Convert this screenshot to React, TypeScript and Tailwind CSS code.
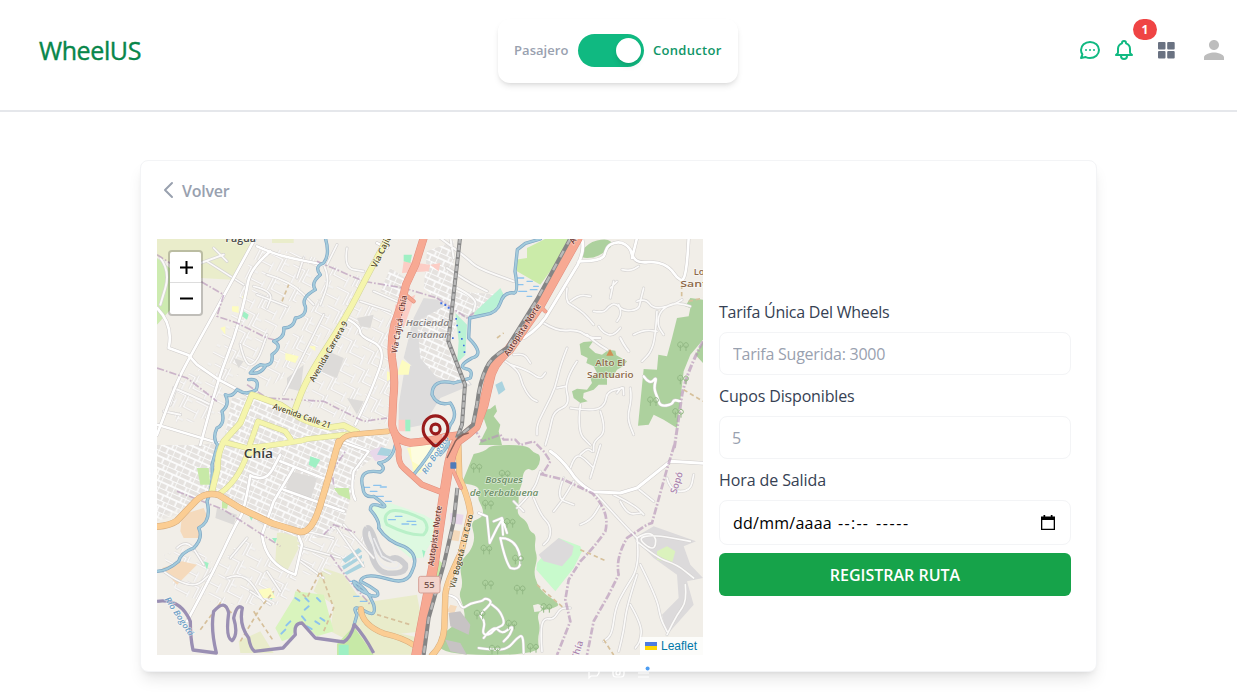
import { HiOutlineBell, HiOutlineChat, HiOutlineChevronLeft, HiOutlineLocationMarker } from 'react-icons/hi';
import { MdPerson } from 'react-icons/md';

type Line = { d: string; w?: number };

/* Motorways and main roads, drawn in one shared coordinate space. */
const TRUNK: Line[] = [
  { d: 'M800 0 L775 80 L747 140 Q735 200 712 260 Q700 310 705 360 Q716 420 709 480 L705 560 Q712 608 760 614 Q810 612 870 596 L905 592', w: 21 },
  { d: 'M712 590 L725 635 Q722 675 740 690 L795 740 L860 765', w: 15 },
  { d: 'M1262 0 L1150 200 L1056 335 Q1005 375 996 430 L980 500 L956 565 Q930 590 900 610 Q880 650 874 690 L858 790 L830 980 L778 1250', w: 27 },
  { d: 'M890 660 L885 690 L912 750 M850 760 Q865 758 868 730', w: 9 },
  { d: 'M1140 195 L1165 220 M745 170 L770 190', w: 9 },
];
const ORANGE: Line[] = [
  { d: 'M545 624 Q553 590 600 588 L692 580', w: 14 },
  { d: 'M545 610 L520 700 L490 801 Q465 884 430 882 L345 856 L250 811 L185 771 Q145 760 115 790 L60 848 Q40 862 0 866', w: 17 },
  { d: 'M612 1114 Q615 1160 680 1186 Q740 1200 768 1220', w: 15 },
  { d: 'M904 621 L907 720 Q935 780 940 825 L912 945 Q868 1035 865 1070 L862 1170 Q858 1220 825 1252', w: 16 },
];
const YELLOW: Line[] = [
  { d: 'M692 0 L632 110 L566 240 L450 420 L412 520', w: 16 },
  { d: 'M600 582 L560 562 L520 568 Q470 560 430 540 L370 500 L285 470 L250 555 L200 610 Q180 650 182 690 L165 760', w: 16 },
  { d: 'M200 612 L270 630 Q430 612 450 603 L600 586', w: 14 },
  { d: 'M275 630 L303 550 L385 580 L402 605 M330 625 L270 650 Q242 730 190 765', w: 14 },
];

/* Local streets. */
const STREETS: Line[] = [
  { d: 'M295 0 L230 120 L100 355 L60 430 L0 590', w: 8 },
  { d: 'M340 40 L280 90 L265 180 L232 300 L185 420 L130 621', w: 8 },
  { d: 'M0 210 Q50 260 35 330 L95 352 L120 380 L185 425 L280 475', w: 8 },
  { d: 'M0 560 L100 590 L200 620 M300 25 L345 45 L400 60 L500 80', w: 7 },
  { d: 'M575 245 L610 265 L608 295 L690 330 L640 465 L595 560 M660 15 L690 30', w: 7 },
  { d: 'M280 712 L262 820 L235 860 L170 1000 L90 1150 M280 712 L325 735 L370 650 M370 670 L510 725', w: 8 },
  { d: 'M410 690 L350 790 L315 890 Q325 980 415 1010 L435 920 L425 895 M380 755 L560 820', w: 8 },
  { d: 'M550 610 L635 640 L590 700 Q580 760 595 785', w: 7 },
  { d: 'M1274 0 Q1285 35 1262 80 L1180 215 Q1155 265 1100 300', w: 9 },
  { d: 'M1265 70 L1300 70 L1340 60 L1345 40 L1355 20 L1390 10 L1420 30 L1425 55 L1445 75 L1500 70 L1540 90 L1560 120 L1580 130 L1590 80 L1595 0 M1425 60 L1440 0', w: 8 },
  { d: 'M1180 640 Q1210 660 1240 700 Q1260 735 1305 761 L1390 765 L1440 750 L1540 670 L1638 676', w: 9 },
  { d: 'M1460 415 L1478 440 L1500 415 L1490 450 L1502 480 L1510 505 L1545 500 L1550 485 L1570 490', w: 7 },
  { d: 'M965 825 L990 835 L998 915 L1020 870 L1035 845 L1038 890 M1010 850 L1035 840 L1050 885 M1030 900 Q1080 900 1090 960 Q1095 1000 1060 990 Q1045 970 1030 900', w: 6 },
  { d: 'M870 1070 L900 1075 L915 1115 L940 1095 L975 1090 L985 1080 L1005 1090 L990 1110 L965 1130 L985 1150 L975 1190 L1000 1190 L1015 1170 L1045 1160 L1030 1120 L1005 1100 M980 1200 L1010 1160 L1035 1190 L1070 1160 L1060 1190 L1040 1210 M965 1230 L1000 1235 L1050 1235 L1080 1200 L1098 1190 L1100 1245', w: 6 },
];
const LANES: Line[] = [
  { d: 'M150 70 L260 140 M210 70 L170 30 M330 110 L400 130 L470 200 M300 170 L390 205 M250 320 L265 385 L300 375 L330 290 M290 145 L350 160 L330 210 M440 60 L420 120 M500 230 L450 330 L380 470', w: 5 },
  { d: 'M10 60 L40 100 L10 200 M50 450 L120 480 L160 500 M40 500 L60 440 M20 520 L70 530 M60 120 L100 60 M90 90 L200 50', w: 6 },
  { d: 'M500 80 L520 120 L490 200 M540 20 L510 80 M570 30 L560 90 L620 100 M650 160 L720 190 M610 190 L700 220 M560 260 L520 340', w: 5 },
  { d: 'M850 0 L930 60 L960 90 L1070 130 M870 90 L930 130 L990 160 M900 150 L960 180 L950 220 M880 0 L890 60', w: 6 },
  { d: 'M1230 150 L1225 190 L1250 205 L1280 225 L1310 260 M1240 190 L1265 170 L1300 175 M1310 220 L1340 225 L1355 205 L1375 195 L1400 220 L1445 215 L1450 190 L1460 150 M1370 130 L1360 180 M1360 150 L1380 130', w: 5 },
  { d: 'M1390 270 L1370 295 L1340 285 L1325 265 M1380 250 L1395 230 L1385 200 M1440 190 L1465 180 L1490 215 L1550 200 L1575 185 M1500 220 L1495 300 L1480 345 L1455 370 M1600 205 L1560 190 L1510 215 L1500 260 L1520 290 M1430 290 L1460 275 L1500 280 M1395 95 L1420 100 L1445 85', w: 5 },
  { d: 'M1160 255 L1200 280 L1260 275 L1300 300 L1330 300 M1390 300 L1400 320 L1415 340 M1290 290 L1310 310 L1350 335', w: 6 },
  { d: 'M1045 370 L1085 395 L1095 440 L1120 480 L1140 490 M1060 380 L1110 395 L1150 425 L1165 405 M1230 330 L1210 380 L1195 450 L1165 510 L1140 560 L1140 590 M1070 350 L1100 345 L1120 375', w: 5 },
  { d: 'M1260 370 L1220 430 L1240 500 L1190 520 L1180 570 L1165 621 M1240 510 L1310 520 L1345 500 L1350 460 L1400 450 M1330 520 L1350 580 L1310 610 L1310 640 M1420 450 L1425 480 L1410 540 L1430 590 M1270 500 L1260 580 L1300 621 M1200 450 L1225 445 M1400 470 L1400 440 L1380 465', w: 5 },
  { d: 'M1080 810 L1130 760 L1150 700 M1070 790 L1100 820 M1130 780 L1150 830 L1180 860 L1180 900 L1160 920 M1190 820 L1215 790 L1250 730 M1220 720 L1195 780 L1250 800 M1270 860 L1300 850 L1330 800 M1310 760 L1400 860 L1440 900', w: 5 },
  { d: 'M1240 690 L1250 660 L1270 650 L1310 690 M1330 621 L1300 720 M1370 770 L1430 800 L1460 830 M1440 750 L1490 790 M1390 790 L1410 830 L1450 825 M1530 720 L1540 760 L1600 760 L1610 710 M1270 650 L1290 630 L1305 640', w: 5 },
  { d: 'M1440 900 L1450 980 L1400 1060 L1375 1110 L1365 1190 L1340 1210 M1450 980 L1500 1080 L1510 1140 L1530 1180 M1440 1010 L1410 1100 L1400 1180 L1385 1240 M1420 1100 L1455 1160 L1450 1210 L1435 1230 M1440 900 L1470 880 L1500 900 L1490 940 L1440 900 L1490 890 L1600 910 M1440 910 L1500 960 L1560 980 L1610 1020 M1585 1040 L1590 1090 L1560 1130 L1530 1190', w: 5 },
  { d: 'M1155 1240 L1150 1180 L1160 1140 L1190 1145 L1210 1110 L1240 1110', w: 5 },
  { d: 'M20 1000 L100 1060 L170 1000 M60 930 L90 900 L140 980 M210 1020 L260 1000 L320 1090 M280 1060 L340 1100 M220 960 L270 900 M330 1000 L370 1060', w: 5 },
  { d: 'M450 880 L530 900 M440 930 L550 960 M430 970 L500 1020 M560 860 L650 960 M540 870 L620 985', w: 5 },
];

const RIVERS: Line[] = [
  { d: 'M505 0 Q520 50 500 75 Q470 85 490 110 Q460 135 475 155 Q430 180 445 205 Q450 235 415 240 Q410 270 380 270 Q385 300 350 310 Q380 325 345 350 Q350 390 310 380 Q290 390 280 405 Q310 410 325 385 M275 425 Q310 420 298 455 Q270 475 240 455 Q225 480 205 470 Q220 500 195 520 Q205 560 180 570 Q165 600 182 621 L165 680 Q170 740 150 790 Q165 850 125 870 Q140 900 110 930 Q70 945 65 970 Q30 1000 0 1000', w: 6 },
  { d: 'M1150 3 L1105 16 L1081 35 L1074 100 Q1085 160 1072 165 Q1040 160 1030 195 Q1020 225 985 230 L938 240 L935 300 Q985 350 945 360 Q900 385 925 392 Q950 395 940 420 Q910 430 890 435 Q825 420 825 470 Q840 505 880 495 Q905 530 880 560 Q860 610 882 640', w: 6 },
  { d: 'M872 600 Q880 620 850 650 M845 600 Q820 650 770 710', w: 6 },
  { d: 'M715 621 Q705 670 665 675 Q690 690 670 702 Q600 690 618 750 Q620 780 650 775 Q700 810 675 806 Q640 790 640 815 Q670 850 665 870 Q690 910 740 925 Q790 950 765 1000 Q750 1040 700 1025 Q620 1000 610 1030 Q640 1045 660 1060 Q670 1080 640 1072 Q590 1050 590 1030 Q630 1050 650 1100 Q660 1140 625 1120 Q580 1095 600 1130 L590 1165', w: 6 },
];

const FOREST = 'M950 648 L985 640 L1000 621 L1110 621 L1130 645 L1150 650 L1148 680 L1130 700 L1112 690 L1098 705 L1095 740 L1085 760 L1085 800 L1080 830 L1110 850 L1118 880 L1138 890 L1132 930 L1142 960 L1130 1000 L1140 1040 L1165 1070 L1210 1098 L1190 1112 L1155 1115 L1140 1130 L1150 1170 L1142 1200 L1148 1251 L845 1251 L845 1190 L870 1180 L890 1160 L925 1150 L920 1105 L905 1070 L918 1040 L908 990 L918 960 L940 940 L955 900 L940 850 L975 840 L980 815 L960 780 L970 745 L915 735 Z';

/* Rounds the corners of a polyline by curving through the middle of each leg. */
function smooth(d: string): string {
  if (d.includes('Q')) return d;
  return d
    .split('M')
    .filter((part) => part.trim())
    .map((part) => {
      const n = (part.match(/-?\d+(\.\d+)?/g) ?? []).map(Number);
      let out = `M${n[0]} ${n[1]}`;
      for (let i = 2; i < n.length - 2; i += 2) {
        out += `Q${n[i]} ${n[i + 1]} ${(n[i] + n[i + 2]) / 2} ${(n[i + 1] + n[i + 3]) / 2}`;
      }
      return `${out}L${n[n.length - 2]} ${n[n.length - 1]}`;
    })
    .join('');
}

function Roads({ lines, color, casing, edge }: { lines: Line[]; color: string; casing: string; edge: number }) {
  return (
    <g fill="none" strokeLinejoin="round" strokeLinecap="round">
      {lines.map((l) => <path key={`c${l.d}`} d={smooth(l.d)} stroke={casing} strokeWidth={(l.w ?? 8) + edge} />)}
      {lines.map((l) => <path key={l.d} d={smooth(l.d)} stroke={color} strokeWidth={l.w ?? 8} />)}
    </g>
  );
}

function Label({ x, y, r = 0, size = 28, fill = '#574f2c', italic = false, w, children }: {
  x: number; y: number; r?: number; size?: number; fill?: string; italic?: boolean; w?: number; children: string;
}) {
  return (
    <text
      transform={`translate(${x} ${y}) rotate(${r})`}
      fontSize={size}
      fill={fill}
      stroke="#ffffff"
      strokeOpacity={0.55}
      strokeWidth={4}
      paintOrder="stroke"
      textAnchor="middle"
      fontStyle={italic ? 'italic' : 'normal'}
      fontWeight={600}
      textLength={w}
      lengthAdjust="spacingAndGlyphs"
    >
      {children}
    </text>
  );
}

function MapDrawing() {
  return (
    <svg viewBox="0 3 1638 1248" className="block h-full w-full" style={{ fontFamily: '"Open Sans", "Noto Sans", sans-serif' }}>
      <defs>
        <pattern id="blocks" width="44" height="34" patternUnits="userSpaceOnUse" patternTransform="rotate(24)">
          <rect width="44" height="34" fill="#e5e2df" />
          <path d="M0 0H44M0 0V34M24 16V34M0 17H44M34 0V17" stroke="#fbfbfb" strokeWidth="5" />
        </pattern>
        <pattern id="sparse" width="74" height="62" patternUnits="userSpaceOnUse" patternTransform="rotate(27)">
          <path d="M5 0V42H50M30 10H70V50M50 62V30M5 18H22" fill="none" stroke="#d9d6d3" strokeWidth="7" />
          <path d="M5 0V42H50M30 10H70V50M50 62V30M5 18H22" fill="none" stroke="#fbfafa" strokeWidth="4.5" />
        </pattern>
      </defs>
      <rect width="1638" height="1254" fill="#f1eee8" />

      {/* Land use */}
      <path d="M0 0H295L225 125L130 120L0 55Z M345 0H410V15H345Z" fill="#eaedcb" />
      <path d="M0 60L45 95L40 215L0 260Z" fill="#cdebb0" />
      <path d="M360 885L415 880L430 920L390 1000L355 970Z M120 630L175 640L155 745L130 700Z M500 990L560 1010L600 1070L650 1090L780 1070L800 1180L700 1190L610 1160L560 1200L520 1180L530 1100L470 1060Z M245 1210L310 1180L350 1245H250Z M610 1160L790 1200L775 1250H600Z" fill="#e9eccb" />
      <path d="M225 480L300 480L420 530L540 570L640 590L700 600L690 621L600 700L560 860L500 900L430 900L330 870L180 765L0 840V621L130 621L200 610Z" fill="url(#blocks)" />
      <path d="M0 621H170L150 760L60 830L0 850Z" fill="url(#blocks)" opacity=".5" />
      <path d="M300 20L480 60L480 130L400 210L350 280L280 390L200 440L150 380L240 200L270 90Z M130 390L230 450L190 540L60 560L40 480L70 420Z M520 80L620 120L560 230L440 380L330 450L290 430L370 340L480 190Z M600 190L720 230L700 560L560 550L440 500L450 420L570 250Z M20 950L110 920L170 980L270 900L330 960L420 1020L380 1100L200 1100L60 1070Z M420 900L520 870L640 900L600 960L520 1010L430 1010Z" fill="url(#sparse)" />
      <path d="M510 340L560 360L540 420L490 400Z M600 240L650 230L640 270L610 265Z M390 420L440 380L430 460L390 450Z M570 480L620 490L600 530Z M230 360L260 370L245 390Z M180 810L240 830L230 860L175 840Z M400 700L480 720L460 790L385 760Z" fill="#dddbd9" />
      <path d="M745 380L830 400L880 360L945 440L850 480L800 560L725 575L725 500Z M800 180L880 190L860 320L820 440L740 360L770 240Z" fill="#dddcdc" />
      <path d="M810 40L890 10L890 160L1040 170L1000 230L920 240L870 210L800 150Z M780 250L870 200L900 260L870 330L940 440L840 420L790 360Z M700 90L760 130L740 190L670 160Z" fill="url(#blocks)" />
      <path d="M740 70L820 80L815 100L735 105Z M715 200L775 170L740 270L712 230Z M725 545L745 545L745 580L725 580Z M820 80L850 75L845 100Z" fill="#fccdc5" />
      <path d="M1110 30L1170 0L1252 0L1150 140L1080 100L1075 65L1110 60Z" fill="#cbeba9" />
      <path d="M950 225L1030 150L1045 180L1000 225L955 235Z M895 225L930 260L925 350L900 375L905 310Z" fill="#b9f2d4" />
      <path d="M640 800L700 795L800 830L835 850L830 900L795 960L760 960L690 900Z" fill="#def9e1" />
      <path d="M355 1170L410 1080L415 1060L500 1070L530 1180L480 1195L430 1150L400 1200L375 1210Z" fill="#d9f4bd" />
      <path d="M540 1218L590 1165L650 1251H540Z M530 750L575 750L580 785L545 770Z M120 690L155 690L160 740L130 740Z M195 790L215 790L210 812L195 810Z M840 960L860 980L840 1070L825 1060Z" fill="#c7e9a7" />
      <path d="M545 1220L575 1220L575 1251H545Z M460 655L475 660L490 665L475 690L455 680Z M275 830L290 835L283 848ZM740 50L765 50L760 75L740 70ZM260 220L275 230L270 245L255 235ZM140 970L155 975L150 995ZM330 1055L350 1065L345 1085L330 1075ZM795 935L805 940L800 960ZM745 545L760 545L760 580L745 580ZM345 900L360 900L355 915Z" fill="#9ff0c4" />
      <path d="M75 830L140 810L155 845L125 870L130 900L80 900L70 880Z M15 990L75 970L120 980L60 1040Z M885 875L910 880L905 910L875 905ZM880 1100L900 1105L890 1130L870 1120Z" fill="#f5dabc" />
      <path d="M750 630L830 621L840 640L800 700L770 710L765 675Z M735 365L760 380L755 410L720 410ZM385 345L425 355L415 375L385 365ZM305 1055L340 1050L355 1080L310 1080ZM255 175L265 175L260 190ZM225 205L245 205L245 225L225 220ZM455 325L475 325L475 340ZM190 270L205 265L205 290ZM690 400L720 410L690 430Z" fill="#fdfcc0" />
      <path d="M760 620L870 600L850 640L800 690L765 670Z" fill="#fdfde0" />
      <path d="M635 640L675 625L690 660L655 670ZM880 825L920 830L915 860L880 855Z" fill="#e8d8ea" />
      <path d="M672 628L705 635L695 655L660 650ZM555 965L605 930L615 940L565 975ZM555 985L615 950L615 960L560 995ZM560 1005L620 970L620 985L570 1010ZM1015 440L1035 430L1045 455L1025 470Z" fill="#aad3df" />
      <path d="M1140 975L1205 900L1270 925L1275 940L1250 990L1195 1060L1138 995Z" fill="#c8facc" />
      <path d="M1145 950L1205 900L1250 925L1245 950L1215 985L1160 970ZM1430 900L1490 865L1617 910L1580 925L1600 980L1638 1020L1590 1030L1610 1100L1530 1190L1515 1130L1565 1080L1560 1010L1490 960Z" fill="#dcdadb" />
      <path d="M1500 940L1530 925L1555 940L1545 975L1500 965Z" fill="#dbf2bd" />
      <path d={smooth(FOREST)} fill="#add19e" />
      <path d="M985 515L1000 512L1015 500L1020 520L1010 535L1030 560L1025 580L1035 621L965 621L980 590L990 570L980 540Z" fill="#add19e" />
      <path d="M875 1125L910 1120L940 1160L935 1190L880 1165ZM865 1205L910 1215L930 1251L880 1240Z" fill="#c7c3c4" />
      <path d={smooth('M1275 40 L1290 15 L1350 0 L1370 20 L1340 45 L1310 60 L1270 60 L1275 40')} fill="#add19e" />
      <path d="M1268 318L1280 312L1308 310L1296 328L1315 345L1335 350L1355 335L1375 338L1378 352L1410 370L1398 385L1380 395L1365 420L1350 418L1350 440L1325 440L1310 455L1280 465L1278 480L1292 490L1270 495L1250 480L1245 460L1260 452L1290 455L1305 435L1300 420L1320 405L1310 385L1288 375L1292 360L1272 350Z M1560 240L1595 235L1600 210L1585 205L1600 180L1638 185V305L1600 350L1580 400L1560 570L1520 545L1490 530L1475 560L1443 563L1460 393L1500 395L1504 350L1530 355L1545 300Z M1615 350L1638 310V375Z" fill="#add19e" />
      <path d="M1128 1102L1143 1098L1158 1105L1150 1120L1132 1122Z" fill="#f1eee8" />

      {/* Wetland marks */}
      <g stroke="#8cc3ee" strokeWidth="4" strokeLinecap="round">
        <path d="M1080 120h20M1080 140h18M1110 130h16M1085 160h24M1120 155h20M1110 175h14M1130 145h14M620 748h18M650 742h22M640 760h20M670 747h18M655 775h24M685 790h18M695 845h20M715 835h20M750 850h26M735 858h20M765 860h12M580 1030h20M600 1055h20M590 1075h16M610 1090h20" />
        <path d="M415 1080l12 8M445 1080l10 10M455 1105l-12 10M480 1080l10 10M475 1150l12 8M490 1140l12 8M400 1150l-12 12M385 1175l-12 12M435 1135l10 12M450 1165l14 8" strokeWidth="6" />
      </g>
      <g fill="none">
        <path d="M700 820Q675 835 690 860Q760 895 800 890Q820 870 800 845Q730 810 700 820Z" stroke="#b9f0c8" strokeWidth="9" />
        <path d="M630 870Q615 885 640 930Q650 1000 690 1005Q750 1010 745 980Q720 950 700 965Q670 960 655 910Q640 865 630 870" stroke="#cdcdd0" strokeWidth="17" />
        <path d="M636 880L655 945Q665 985 695 990Q730 995 725 975M650 900L675 955L715 975" stroke="#ececee" strokeWidth="5" />
      </g>

      <Roads lines={LANES} color="#fbfaf9" casing="#d6d4d3" edge={4} />
      <Roads lines={STREETS} color="#ffffff" casing="#cfcccb" edge={3} />

      {/* Municipal boundaries */}
      <g fill="none" stroke="#b796b9" strokeWidth="5" strokeDasharray="22 6 5 6" opacity=".65">
        <path d="M0 50L70 95L200 170L180 235L240 255L330 300L370 310M480 70L620 130L740 150L840 180" />
        <path d="M0 390L90 420L180 490M270 440L330 480L500 490L620 550L690 540M60 760L200 815L370 925M530 740L525 700L565 640M500 890L530 860L600 885" />
        <path d="M520 950L570 1020L640 1100M840 180L900 220L930 240L950 225" />
        <path d="M1552 621L1528 700L1485 855L1470 860L1410 900Q1375 960 1385 1010L1355 1070L1310 1150L1290 1251" strokeWidth="8" />
        <path d="M1150 708L1220 725L1305 765Q1360 820 1345 880Q1310 930 1270 970L1235 1025L1225 1085L1240 1150L1200 1251" strokeWidth="8" />
        <path d="M950 570L975 610L1030 590L1040 605L1075 605L1090 621L1130 610L1160 640L1180 670L1155 710" strokeWidth="7" />
        <path d="M1638 310Q1590 400 1575 470L1552 630" strokeWidth="9" />
      </g>
      <path d="M130 1175L190 1095L230 1130M250 1210L310 1110L350 1060M290 1120L350 1210M420 1055L450 1080L490 1000L530 1110L500 1180M660 1130L760 1160M1580 455L1638 490M1574 140V180M1595 190L1638 180M1270 935L1350 970M1140 1040L1220 1110M1340 1205L1370 1251M1020 300L1040 285M375 190L395 140" fill="none" stroke="#d6c09b" strokeWidth="5" strokeDasharray="13 9" />

      {/* Rivers */}
      <Roads lines={RIVERS} color="#a3cbdc" casing="#7fa6c4" edge={4} />
      <path d="M0 1090Q70 1080 100 1150Q100 1200 108 1236L178 1245Q160 1170 170 1120Q205 1080 215 1125Q205 1200 225 1208Q245 1190 230 1140Q240 1095 256 1110Q245 1160 275 1200Q280 1230 292 1240L378 1230L415 1190Q410 1155 435 1155L475 1200L560 1212Q580 1200 592 1160Q620 1190 650 1245" fill="none" stroke="#9a8fb3" strokeWidth="10" strokeLinejoin="round" />

      {/* Trees */}
      <g fill="none" stroke="#93b985" strokeWidth="3">
        {[[950, 690], [1035, 710], [985, 800], [1050, 855], [980, 935], [1075, 965], [985, 1040], [1080, 1055], [960, 1130], [1055, 1160], [1005, 1235], [1120, 1230], [1160, 1110], [1570, 325], [1570, 425], [1480, 490], [1555, 525]].map(([x, y]) => (
          <path key={`${x}-${y}`} d={`M${x} ${y + 14}V${y - 4}M${x - 7} ${y}a8 9 0 1 1 14 0q-7 8-14 0M${x + 17} ${y + 14}V${y - 2}M${x + 11} ${y + 1}a7 8 0 1 1 12 0q-6 6-12 0`} />
        ))}
      </g>

      <Roads lines={YELLOW} color="#f5f5ac" casing="#d2d498" edge={3} />
      <Roads lines={ORANGE} color="#fbcd93" casing="#d5ab7c" edge={3} />
      <Roads lines={TRUNK} color="#f7a993" casing="#e08e7e" edge={3} />

      {/* Railways */}
      {[
        'M909 0L892 150L874 310L924 440L915 560L900 600',
        'M1241 0L1140 185L1050 330Q1000 360 988 390Q968 430 960 500L948 560L900 600',
        'M901 750L890 850L860 980L815 1140L800 1251',
      ].map((d, i) => (
        <g key={d} fill="none">
          <path d={d} stroke="#858585" strokeWidth="12" />
          <path d={d} stroke="#b9b9b9" strokeWidth="7" strokeDasharray={i === 0 ? '16 5' : '22 22'} />
        </g>
      ))}
      <path d="M888 625Q900 590 935 585M870 660L895 610" fill="none" stroke="#8b625a" strokeWidth="4" />
      <rect x="880" y="673" width="18" height="19" rx="2" fill="#4e7bb9" />
      <path fill="#3f6ee0" d="M850 193h6v6h-6zM862 198h6v6h-6zM872 206h6v6h-6zM895 240h5v5h-5zM898 260h5v5h-5zM905 280h5v5h-5zM912 300h5v5h-5zM918 320h5v5h-5zM885 298h5v5h-5zM920 340h5v5h-5z" />
      <path d="M1359 333L1370 353H1348Z" fill="#d08f55" />

      {/* Labels */}
      <Label x={251} y={13} size={32} fill="#4a4a4a">Fagua</Label>
      <Label x={304} y={661} size={38} fill="#3c3c3c" w={88}>Chía</Label>
      <Label x={522} y={345} r={-60} size={25} w={205}>Avenida Carrera 9</Label>
      <Label x={432} y={542} r={19} size={25} w={182}>Avenida Calle 21</Label>
      <Label x={684} y={38} r={-64} size={26}>Vía Cajicá</Label>
      <Label x={735} y={260} r={-80} size={25} fill="#6b3730" w={175}>Vía Cajicá - Chía</Label>
      <Label x={1103} y={280} r={-57} size={25} fill="#6b3730" w={182}>Autopista Norte</Label>
      <Label x={1262} y={2} r={-57} size={25} fill="#6b3730">Aut</Label>
      <Label x={842} y={895} r={-82} size={25} fill="#6b3730" w={182}>Autopista Norte</Label>
      <Label x={921} y={942} r={-76} size={24} w={228}>Vía Bogotá - La Caro</Label>
      <Label x={811} y={264} size={28} fill="#85817f" italic w={130}>Hacienda</Label>
      <Label x={811} y={301} size={28} fill="#85817f" italic w={126}>Fontanar</Label>
      <Label x={1360} y={384} size={27} fill="#8d6848" w={90}>Alto El</Label>
      <Label x={1360} y={420} size={27} fill="#8d6848" w={140}>Santuario</Label>
      <Label x={1633} y={110} size={28} fill="#8d6848">Los</Label>
      <Label x={1630} y={146} size={28} fill="#8d6848" w={120}>Santos</Label>
      <Label x={1041} y={736} size={28} fill="#6e9068" italic w={113}>Bosques</Label>
      <Label x={1041} y={773} size={28} fill="#6e9068" italic w={206}>de Yerbabuena</Label>
      <Label x={1568} y={737} r={-72} size={28} fill="#aa83ad">Sopó</Label>
      <Label x={1270} y={1240} r={-72} size={28} fill="#aa83ad">Chía</Label>
      <Label x={60} y={1140} r={56} size={25} fill="#6e9fc6" italic w={135}>Río Bogotá</Label>
      <Label x={842} y={655} r={-58} size={25} fill="#6e9fc6" italic w={130}>Río Bogotá</Label>
      <rect x="785" y="1015" width="64" height="50" rx="6" fill="#f3d4cc" stroke="#d5a197" strokeWidth="3" />
      <text x="817" y="1050" fontSize="28" fontWeight="600" textAnchor="middle" fill="#76544e">55</text>
    </svg>
  );
}

function RouteMap() {
  return (
    <div className="relative h-[416px] w-[546px] shrink-0 overflow-hidden bg-[#f1eee8] font-['Liberation_Sans',sans-serif]">
      <MapDrawing />
      <div className="absolute left-[11px] top-[11px] flex h-[66px] w-[35px] flex-col overflow-hidden rounded border-2 border-black/20 bg-white bg-clip-padding">
        <button className="flex h-[31px] items-center justify-center border-b border-[#ddd] pl-px pt-px" aria-label="Zoom in">
          <svg viewBox="0 0 13 13" className="size-[13px] fill-black"><path d="M5.5 0h2v5.5H13v2H7.5V13h-2V7.5H0v-2h5.5z" /></svg>
        </button>
        <button className="flex h-[31px] items-center justify-center pl-px" aria-label="Zoom out">
          <svg viewBox="0 0 13 13" className="size-[13px] fill-black"><path d="M0 5.5h13v2H0z" /></svg>
        </button>
      </div>
      <HiOutlineLocationMarker className="absolute left-[260px] top-[172px] h-[39px] w-[37px] text-[#991b1b]" preserveAspectRatio="none" />
      <div className="absolute bottom-0 right-0 flex h-[18px] items-center gap-1 bg-white/80 pl-[5px] pr-[6px] text-xs text-[#0078a8]">
        <svg viewBox="0 0 12 8" className="h-2 w-3"><path fill="#4C7BE1" d="M0 0h12v4H0z" /><path fill="#FFD500" d="M0 4h12v4H0z" /></svg>
        Leaflet
      </div>
    </div>
  );
}

export default function App() {
  return (
    <div className="relative h-[693px] w-full overflow-hidden bg-white font-['Open_Sans','Noto_Sans',sans-serif]">
      <header className="flex h-28 items-start border-b-2 border-gray-200 pl-[39px] pr-[8px]">
        <h1 className="mt-[31px] w-[459px] whitespace-nowrap text-[25px] leading-[38px] font-medium tracking-[-0.4px] text-[#07864a] [-webkit-text-stroke:0.4px_#07864a]">WheelUS</h1>
        <div className="mt-[19px] flex h-16 w-[240px] items-center justify-center rounded-xl bg-white shadow-md">
          <span className="w-[55px] whitespace-nowrap text-[13px] font-semibold tracking-[0.05px] text-gray-400">Pasajero</span>
          <span className="mx-[9px] -mt-0.5 flex h-[33px] w-[66px] items-center justify-end rounded-full bg-[#10b981] pr-[3px]">
            <span className="size-[25px] rounded-full bg-white shadow-md" />
          </span>
          <span className="w-[69px] whitespace-nowrap text-[13px] font-semibold tracking-[0.3px] text-[#0f9668]">Conductor</span>
        </div>
        <nav className="mt-[35px] flex flex-1 items-center justify-end">
          <HiOutlineChat className="mr-[10px] size-6 text-[#10b981]" />
          <div className="relative mr-[22px]">
            <HiOutlineBell className="size-6 text-[#10b981]" />
            <span className="absolute -top-[19px] left-[21px] flex h-[21px] w-6 items-center justify-center rounded-full bg-[#ef4444] text-xs font-bold text-white">1</span>
          </div>
          <svg viewBox="0 0 17 17" className="mr-6 size-[17px] fill-gray-500">
            <rect width="7.5" height="7.5" rx="1" />
            <rect x="9.2" width="7.5" height="7.5" rx="1" />
            <rect y="9" width="7.5" height="7.5" rx="1" />
            <rect x="9.2" y="9" width="7.5" height="7.5" rx="1" />
          </svg>
          <MdPerson className="size-[30px] text-[#bdbdbd]" />
        </nav>
      </header>

      <main className="mx-auto mt-12 h-[512px] w-[957px] rounded-lg border border-gray-100 bg-white px-4 shadow-lg">
        <button className="mt-[17px] flex h-6 items-center text-base font-semibold text-gray-400">
          <HiOutlineChevronLeft className="size-6" />
          <span className="ml-px mt-px tracking-[-0.25px]">Volver</span>
        </button>
        <div className="mt-[37px] flex gap-4">
          <RouteMap />
          <form className="mt-[61px] flex w-[352px] flex-col text-base leading-6 text-gray-700">
            <label className="h-8 tracking-[-0.24px]">Tarifa Única Del Wheels</label>
            <input className="h-[43px] rounded-lg border border-gray-100 px-3 pl-[13px] tracking-[-0.24px] placeholder:text-gray-400" placeholder="Tarifa Sugerida: 3000" />
            <label className="mt-[9px] h-8 tracking-[-0.15px]">Cupos Disponibles</label>
            <input className="h-[43px] rounded-lg border border-gray-100 px-3 placeholder:text-gray-400" placeholder="5" />
            <label className="mt-[9px] h-8 tracking-[-0.1px]">Hora de Salida</label>
            <div className="flex h-[45px] items-center justify-between rounded-lg border border-gray-100 pl-[13px] pr-[15px] text-black">
              <span className="flex whitespace-nowrap">
                <span className="w-[105px] tracking-[0.25px]">dd/mm/aaaa</span>
                <span className="w-[38px] tracking-[1.3px]">--:--</span>
                <span className="tracking-[1.6px]">-----</span>
              </span>
              <svg viewBox="0 0 14 15" className="h-[15px] w-[14px] fill-black"><path d="M2.5 0h1.7v1.5h5.6V0h1.7v1.5H14V15H0V1.5h2.5zM1.3 5v8.7h11.4V5z" fillRule="evenodd" /></svg>
            </div>
            <button type="button" className="mt-2 h-[43px] rounded-md bg-[#16a34a] font-semibold tracking-[0px] text-white">REGISTRAR RUTA</button>
          </form>
        </div>
      </main>

      <svg viewBox="0 0 70 16" className="absolute left-[585px] top-[664px] h-4 w-[70px]" fill="none" stroke="white" strokeWidth="1.2">
        <path d="M4 8V14L6 12H12L14 9V7M28 7V10Q28 13 31 13H36Q39 13 39 10V7M33 7A2 2 0 1 0 35 9V7M53 9H64M53 13H64" />
        <circle cx="62.6" cy="4.5" r="2" fill="#4d9df2" stroke="none" />
      </svg>
    </div>
  );
}
